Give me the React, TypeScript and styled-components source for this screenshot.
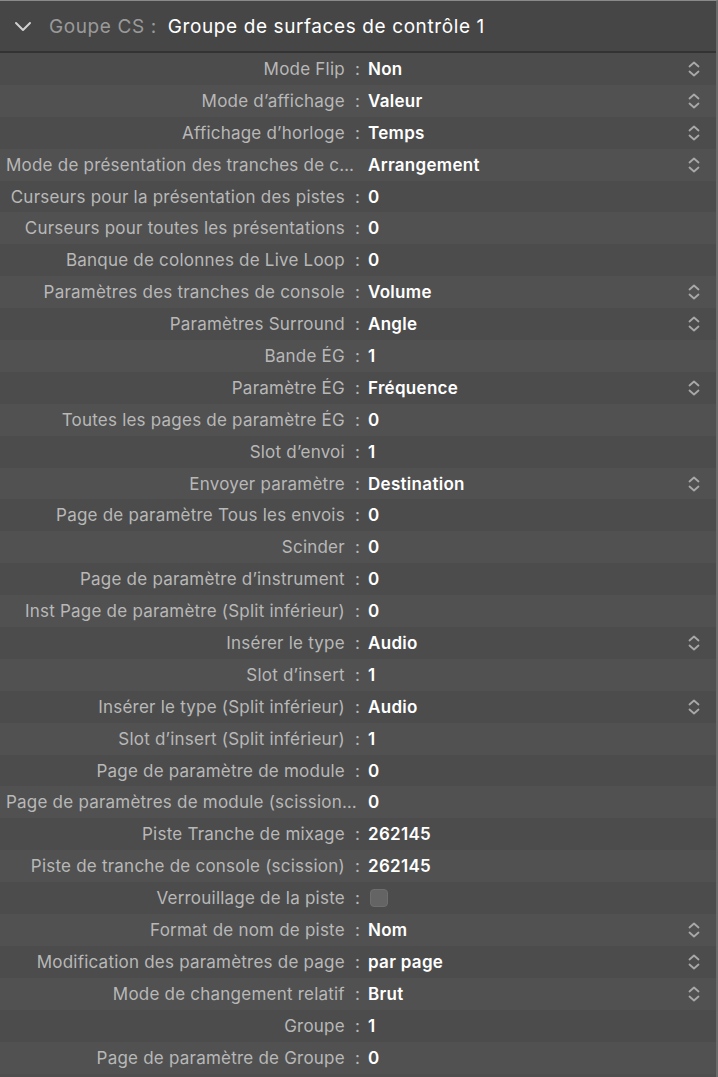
import styled, { createGlobalStyle } from 'styled-components';

type Row = {
  label: string;
  value?: string;
  popup?: boolean;
  checkbox?: boolean;
};

const rows: Row[] = [
  { label: 'Mode Flip', value: 'Non', popup: true },
  { label: 'Mode d’affichage', value: 'Valeur', popup: true },
  { label: 'Affichage d’horloge', value: 'Temps', popup: true },
  { label: 'Mode de présentation des tranches de console', value: 'Arrangement', popup: true },
  { label: 'Curseurs pour la présentation des pistes', value: '0' },
  { label: 'Curseurs pour toutes les présentations', value: '0' },
  { label: 'Banque de colonnes de Live Loop', value: '0' },
  { label: 'Paramètres des tranches de console', value: 'Volume', popup: true },
  { label: 'Paramètres Surround', value: 'Angle', popup: true },
  { label: 'Bande ÉG', value: '1' },
  { label: 'Paramètre ÉG', value: 'Fréquence', popup: true },
  { label: 'Toutes les pages de paramètre ÉG', value: '0' },
  { label: 'Slot d’envoi', value: '1' },
  { label: 'Envoyer paramètre', value: 'Destination', popup: true },
  { label: 'Page de paramètre Tous les envois', value: '0' },
  { label: 'Scinder', value: '0' },
  { label: 'Page de paramètre d’instrument', value: '0' },
  { label: 'Inst Page de paramètre (Split inférieur)', value: '0' },
  { label: 'Insérer le type', value: 'Audio', popup: true },
  { label: 'Slot d’insert', value: '1' },
  { label: 'Insérer le type (Split inférieur)', value: 'Audio', popup: true },
  { label: 'Slot d’insert (Split inférieur)', value: '1' },
  { label: 'Page de paramètre de module', value: '0' },
  { label: 'Page de paramètres de module (scission)', value: '0' },
  { label: 'Piste Tranche de mixage', value: '262145' },
  { label: 'Piste de tranche de console (scission)', value: '262145' },
  { label: 'Verrouillage de la piste', checkbox: true },
  { label: 'Format de nom de piste', value: 'Nom', popup: true },
  { label: 'Modification des paramètres de page', value: 'par page', popup: true },
  { label: 'Mode de changement relatif', value: 'Brut', popup: true },
  { label: 'Groupe', value: '1' },
  { label: 'Page de paramètre de Groupe', value: '0' },
];

const GlobalStyle = createGlobalStyle`
  html, body {
    margin: 0;
    padding: 0;
    background: #4e4e4e;
  }
  body {
    font-family: Inter, "Liberation Sans", sans-serif;
    -webkit-font-smoothing: antialiased;
  }
`;

const Panel = styled.div`
  width: 718px;
  height: 1077px;
  overflow: hidden;
  background: #4e4e4e;
  border-top: 1px solid #8a8a8a;
  border-right: 2px solid #6a6a6a;
  box-sizing: border-box;
`;

const Header = styled.div`
  display: flex;
  align-items: center;
  height: 50px;
  padding-left: 14px;
  background: #464646;
  border-bottom: 2px solid #333333;
  font-size: 19px;
  letter-spacing: 0.6px;
`;

const HeaderLabel = styled.span`
  color: #9a9a9a;
  margin-left: 17px;
  white-space: pre;
`;

const HeaderTitle = styled.span`
  color: #ffffff;
  margin-left: 11px;
`;

const RowBox = styled.div<{ $odd: boolean }>`
  display: flex;
  align-items: center;
  height: 31.9px;
  background: ${(p) => (p.$odd ? '#515151' : '#4c4c4c')};
  font-size: 17px;
  letter-spacing: 0.3px;
`;

const Label = styled.div`
  width: 354px;
  margin-left: 6px;
  color: #b8b8b8;
  letter-spacing: 0.22px;
  text-align: right;
  white-space: nowrap;
  overflow: hidden;
  text-overflow: ellipsis;
  flex-shrink: 0;
`;

const Value = styled.div`
  margin-left: 8px;
  color: #ffffff;
  font-weight: 600;
  flex: 1;
`;

const Checkbox = styled.div`
  margin-left: 10px;
  width: 18px;
  height: 18px;
  border-radius: 4px;
  background: #646464;
  border: 1px solid #6e6e6e;
  box-sizing: border-box;
`;

const Stepper = styled.svg`
  margin-right: 15px;
  flex-shrink: 0;
`;

const Spacer = styled.div`
  flex: 1;
`;

function UpDown() {
  return (
    <Stepper width="14" height="20" viewBox="0 0 14 20">
      <path d="M2.5 7.5 L7 3.5 L11.5 7.5" fill="none" stroke="#a8a8a8" strokeWidth="1.8" strokeLinecap="round" strokeLinejoin="round" />
      <path d="M2.5 12.5 L7 16.5 L11.5 12.5" fill="none" stroke="#a8a8a8" strokeWidth="1.8" strokeLinecap="round" strokeLinejoin="round" />
    </Stepper>
  );
}

function App() {
  return (
    <>
      <GlobalStyle />
      <Panel>
        <Header>
          <svg width="18" height="12" viewBox="0 0 18 12">
            <path d="M2 3 L9 10 L16 3" fill="none" stroke="#d0d0d0" strokeWidth="2" strokeLinecap="round" strokeLinejoin="round" />
          </svg>
          <HeaderLabel>Goupe CS :</HeaderLabel>
          <HeaderTitle>Groupe de surfaces de contrôle 1</HeaderTitle>
        </Header>
        {rows.map((r, i) => (
          <RowBox key={i} $odd={i % 2 === 1}>
            <Label>{r.label}{'\u00a0\u00a0:'}</Label>
            {r.checkbox ? (
              <>
                <Checkbox />
                <Spacer />
              </>
            ) : (
              <Value>{r.value}</Value>
            )}
            {r.popup && <UpDown />}
          </RowBox>
        ))}
      </Panel>
    </>
  );
}

export default App;
